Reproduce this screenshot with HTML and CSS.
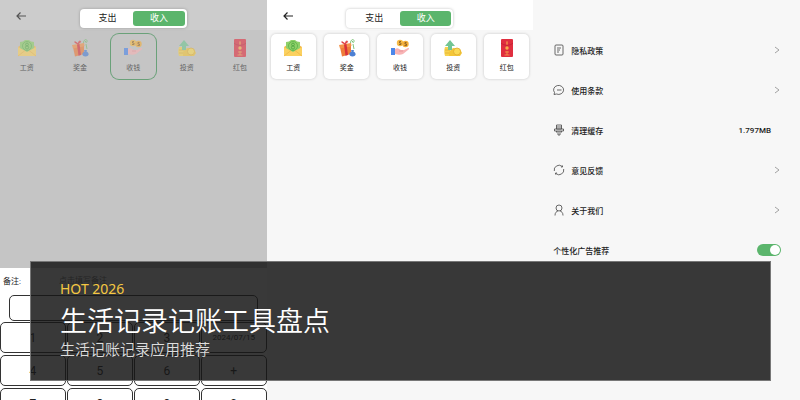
FILE: index.html
```html
<!DOCTYPE html>
<html lang="zh-CN">
<head>
    <meta charset="UTF-8">
    <meta name="viewport" content="width=device-width, initial-scale=1.0">
    <title>生活记录记账工具盘点</title>
    <link rel="stylesheet" href="styles.css">
</head>
<body>
    <!-- shared category icons -->
    <svg class="sprite" aria-hidden="true">
        <symbol id="salary" viewBox="0 0 18 18">
            <path d="M0 8l3-2h12l3 2v9H0z" fill="#f2b84b"/>
            <path d="M2 3l3-.6L7 1h4l2 1.400 3 .6v10H2z" fill="#8fd06a"/>
            <circle cx="9" cy="7" r="4.500" fill="none" stroke="#5cb34a" stroke-width=".8"/>
            <circle cx="9" cy="5.500" r="1.400" fill="none" stroke="#4aa53e" stroke-width=".8"/>
            <circle cx="9" cy="8.500" r="1.600" fill="none" stroke="#4aa53e" stroke-width=".8"/>
            <path d="M0 8l9 5 9-5v9H0z" fill="#fbd160"/>
            <path d="M0 17l7-5.500M18 17l-7-5.500" stroke="#efb544" stroke-width=".7"/>
        </symbol>
        <symbol id="bonus" viewBox="0 0 18 18">
            <path d="M2 8l11-1 0 8-9 2.500z" fill="#ee7c3a"/>
            <path d="M1 6l12-2 .5 3L2 9.500z" fill="#f5934a"/>
            <path d="M6 5.500l2.500-.4 1.500 11-2.500.6z" fill="#d8303a"/>
            <path d="M7 5C4 1 1 3 7 5c0-5 6-3 0 0z" fill="#e8443e" stroke="#d8303a" stroke-width=".6"/>
            <path d="M12.500 4c0-4 4-4.500 3.500-1.500-.4 2-2 1-1.500-.5M15 5l1 5" fill="none" stroke="#72bd6c" stroke-width=".9"/>
            <path d="M13 11h3l-.5 1.500c3 1.500 3 5-1 5s-4-3.500-1-5z" fill="#4c80d4"/>
        </symbol>
        <symbol id="receive" viewBox="0 0 18 18">
            <path d="M0 9h4v7H0z" fill="#4b87ea"/>
            <path d="M4 10c3-2 4 0 6 1h3l4-2c2 0 1 1 0 2l-5 4c-3 1.500-5 .5-8 0z" fill="#f8b4b5"/>
            <path d="M8 12h4" stroke="#e58d94" stroke-width=".8"/>
            <circle cx="9" cy="4" r="3.200" fill="#f6ba45"/>
            <circle cx="14.500" cy="5" r="3.200" fill="#f3ad38"/>
            <path d="M10 2.500H8.500V4H10v1.500H8M15.500 3.500H14V5h1.500v1.500h-2" fill="none" stroke="#7d5420" stroke-width=".8"/>
        </symbol>
        <symbol id="invest" viewBox="0 0 18 18">
            <path d="M1 8h5v9H1c-1-3-1-6 0-9z" fill="#f7d34e"/>
            <path d="M1 11h6M1 14h6" stroke="#e2af32" stroke-width=".8"/>
            <path d="M5 17v-4l4-4 7 1 2 4-2 3z" fill="#f4c638"/>
            <circle cx="13" cy="12.500" r="3.500" fill="#fbda55" stroke="#dfac30" stroke-width=".8"/>
            <path d="M6 1l5 6H8v4H4V7H1z" fill="#72c593"/>
        </symbol>
        <symbol id="packet" viewBox="0 0 18 18">
            <rect x="3" y="0" width="12" height="18" rx="1" fill="#e02e3f"/>
            <path d="M3 4c3 3 9 3 12 0" fill="none" stroke="#b91d30" stroke-width=".7"/>
            <path d="M9 2v4M8 4h2" stroke="#f5a04b" stroke-width=".8"/>
            <circle cx="9" cy="9" r="1.700" fill="#f6ae4a"/>
            <path d="M7 13h4M9 12v4M6.500 16h5" stroke="#f5a04b" stroke-width=".8"/>
        </symbol>
    </svg>

    <main class="screens">
        <section class="screen entry">
            <header class="topbar">
                <button class="back" aria-label="返回"><svg viewBox="0 0 10 10"><path d="M10 5H1M4.500 1.500L1 5l3.500 3.500"/></svg></button>
                <div class="switcher">
                    <button>支出</button>
                    <button class="active">收入</button>
                </div>
            </header>
            <div class="categories">
                <button class="category"><svg><use href="#salary"/></svg>工资</button>
                <button class="category"><svg><use href="#bonus"/></svg>奖金</button>
                <button class="category selected"><svg><use href="#receive"/></svg>收钱</button>
                <button class="category"><svg><use href="#invest"/></svg>投资</button>
                <button class="category"><svg><use href="#packet"/></svg>红包</button>
            </div>
            <div class="sheet">
                <div class="note">
                    <label for="note">备注:</label>
                    <input id="note" type="text" placeholder="点击填写备注">
                </div>
                <input class="amount" type="text" aria-label="金额">
                <div class="keypad">
                    <button>1</button>
                    <button>2</button>
                    <button>3</button>
                    <button class="date">2024/07/15</button>
                    <button>4</button>
                    <button>5</button>
                    <button>6</button>
                    <button>+</button>
                    <button>7</button>
                    <button>8</button>
                    <button>9</button>
                    <button>0</button>
                </div>
            </div>
        </section>

        <section class="screen">
            <header class="topbar">
                <button class="back" aria-label="返回"><svg viewBox="0 0 10 10"><path d="M10 5H1M4.500 1.500L1 5l3.500 3.500"/></svg></button>
                <div class="switcher">
                    <button>支出</button>
                    <button class="active">收入</button>
                </div>
            </header>
            <div class="categories">
                <button class="category"><svg><use href="#salary"/></svg>工资</button>
                <button class="category"><svg><use href="#bonus"/></svg>奖金</button>
                <button class="category"><svg><use href="#receive"/></svg>收钱</button>
                <button class="category"><svg><use href="#invest"/></svg>投资</button>
                <button class="category"><svg><use href="#packet"/></svg>红包</button>
            </div>
        </section>

        <section class="screen settings">
            <a class="row" href="#">
                <svg class="icon" viewBox="0 0 12 12"><rect x="2" y="1" width="8" height="10" rx="1"/><path d="M4 4h4M4 6h3M4 8h2"/></svg>
                <span>隐私政策</span>
                <svg class="chevron" viewBox="0 0 6 8"><path d="M1 1l4 3-4 3"/></svg>
            </a>
            <a class="row" href="#">
                <svg class="icon" viewBox="0 0 12 12"><path d="M1.500 8.500A5 4.500 0 1 1 3.500 10l-2.500.5z"/><path d="M4 6h4.500"/></svg>
                <span>使用条款</span>
                <svg class="chevron" viewBox="0 0 6 8"><path d="M1 1l4 3-4 3"/></svg>
            </a>
            <a class="row" href="#">
                <svg class="icon" viewBox="0 0 12 12"><path d="M3.500 1h5v4h-5zM3.500 3h5M1.500 5h9v2h-9zM3.500 7v1.500M8.500 7v1.500M5 7v4h2V7"/></svg>
                <span>清理缓存</span>
                <span class="value">1.797MB</span>
            </a>
            <a class="row" href="#">
                <svg class="icon" viewBox="0 0 12 12"><path d="M1.300 7A4.800 4.800 0 0 1 9 2.300M10.700 5A4.800 4.800 0 0 1 3 9.700M9.500 1.500v1.500h-1.500M2.500 10.500V9h1.500"/></svg>
                <span>意见反馈</span>
                <svg class="chevron" viewBox="0 0 6 8"><path d="M1 1l4 3-4 3"/></svg>
            </a>
            <a class="row" href="#">
                <svg class="icon" viewBox="0 0 12 12"><circle cx="6" cy="4" r="3"/><path d="M2 11.500c0-3 1.500-4 3-4.600M10 11.500c0-3-1.500-4-3-4.600"/></svg>
                <span>关于我们</span>
                <svg class="chevron" viewBox="0 0 6 8"><path d="M1 1l4 3-4 3"/></svg>
            </a>
            <label class="row">
                <span>个性化广告推荐</span>
                <input class="toggle" type="checkbox" checked>
            </label>
        </section>
    </main>

    <div class="banner">
        <p class="tag">HOT 2026</p>
        <h1>生活记录记账工具盘点</h1>
        <p class="subtitle">生活记账记录应用推荐</p>
    </div>
</body>
</html>
```
FILE: styles.css
```css
* {
    box-sizing: border-box;
}

body {
    margin: 0;
    height: 100vh;
    overflow: hidden;
    position: relative;
    background-color: #f7f7f7;
    color: #222;
    font-family: Roboto, "Noto Sans CJK SC", sans-serif;
    font-size: 8px;
}

button,
input {
    margin: 0;
    padding: 0;
    border: none;
    background: none;
    color: inherit;
    font: inherit;
}

.sprite {
    position: absolute;
    width: 0;
    height: 0;
}

.screens {
    display: grid;
    grid-template-columns: repeat(3, 1fr);
    height: 100%;
}

.screen {
    min-width: 0;
}

/* Top bar */
.topbar {
    display: grid;
    grid-template-columns: 1fr auto 1fr;
    align-items: center;
    height: 30px;
    padding: 6px 16px 0;
    background-color: #fff;
}

.back {
    justify-self: start;
    width: 10px;
    height: 10px;
    margin-bottom: 4px;
}

.back svg {
    display: block;
    width: 10px;
    height: 10px;
    fill: none;
    stroke: #222;
    stroke-width: 1.2;
}

.switcher {
    display: grid;
    grid-template-columns: 1fr 1fr;
    width: 107px;
    height: 19px;
    padding: 2px;
    border-radius: 4px;
    background-color: #fff;
    box-shadow: 0 0 3px rgba(0, 0, 0, 0.25);
}

.switcher button {
    border-radius: 3px;
    font-size: 9px;
    line-height: 15px;
}

.switcher .active {
    background-color: #5bb56c;
    color: #fff;
}

/* Categories */
.categories {
    display: grid;
    grid-template-columns: repeat(5, 1fr);
    gap: 8px;
    padding: 4px;
}

.category {
    display: flex;
    flex-direction: column;
    align-items: center;
    gap: 6px;
    height: 45px;
    padding-top: 5px;
    border-radius: 5px;
    background-color: #fff;
    box-shadow: 0 0 3px rgba(0, 0, 0, 0.2);
    font-size: 7px;
    line-height: 10px;
}

.category svg {
    width: 18px;
    height: 18px;
}

/* Entry screen, dimmed behind its bottom sheet */
.entry {
    display: flex;
    flex-direction: column;
    position: relative;
    background-color: #f7f7f7;
}

.entry::before {
    content: "";
    position: absolute;
    inset: 0;
    background-color: rgba(0, 0, 0, 0.2);
}

.entry .switcher {
    position: relative;
}

.entry .back {
    opacity: 0.7;
}

.entry .category {
    background: none;
    box-shadow: none;
    opacity: 0.6;
}

.entry .category.selected {
    border-radius: 8px;
    box-shadow: 0 0 0 1px #2f8a48;
}

.sheet {
    position: relative;
    height: 132px;
    margin-top: auto;
    overflow: hidden;
    background-color: #fff;
}

.note {
    display: flex;
    align-items: center;
    gap: 38px;
    height: 27px;
    padding: 0 3px 2px;
}

.note input {
    flex: 1;
    min-width: 0;
}

.note input::placeholder {
    color: #777;
    opacity: 1;
}

.amount {
    display: block;
    width: calc(100% - 18px);
    height: 26px;
    margin: 0 9px 1px;
    border: 1px solid #333;
    border-radius: 5px;
}

.keypad {
    display: grid;
    grid-template-columns: repeat(4, 1fr);
    grid-auto-rows: 31px;
    gap: 2px 1px;
}

.keypad button {
    border: 1px solid #333;
    border-radius: 5px;
    font-size: 12px;
}

.keypad .date {
    font-size: 8px;
}

/* Settings */
.settings {
    padding: 30px 19px 0 20px;
}

.row {
    display: flex;
    align-items: center;
    height: 40px;
    color: inherit;
    font-weight: 500;
    text-decoration: none;
}

.icon {
    width: 12px;
    height: 12px;
    margin-right: 6px;
    fill: none;
    stroke: #444;
    stroke-width: 0.8;
}

.chevron {
    width: 6px;
    height: 8px;
    margin-left: auto;
    margin-right: 1px;
    fill: none;
    stroke: #999;
    stroke-width: 0.9;
}

.value {
    margin-left: auto;
    margin-right: 10px;
}

.toggle {
    appearance: none;
    width: 24px;
    height: 12px;
    margin-left: auto;
    padding: 1px;
    border-radius: 6px;
    background-color: #5bb56c;
}

.toggle::before {
    content: "";
    display: block;
    width: 10px;
    height: 10px;
    margin-left: auto;
    border-radius: 50%;
    background-color: #fff;
}

/* Banner */
.banner {
    position: absolute;
    right: 29px;
    bottom: 19px;
    left: 30px;
    padding: 15px 29px 23px;
    border: 1px solid #777;
    background-color: rgba(22, 22, 22, 0.85);
    background-clip: padding-box;
    color: #fff;
    font-family: "Noto Sans", "Noto Sans CJK SC", sans-serif;
}

.banner p,
.banner h1 {
    margin: 0;
}

.banner .tag {
    color: #f5c842;
    font-size: 14px;
    line-height: 24px;
}

.banner h1 {
    font-size: 27px;
    font-weight: 350;
    line-height: 40px;
}

.banner .subtitle {
    color: #ddd;
    font-size: 15px;
    font-weight: 350;
    line-height: 16px;
}
```
